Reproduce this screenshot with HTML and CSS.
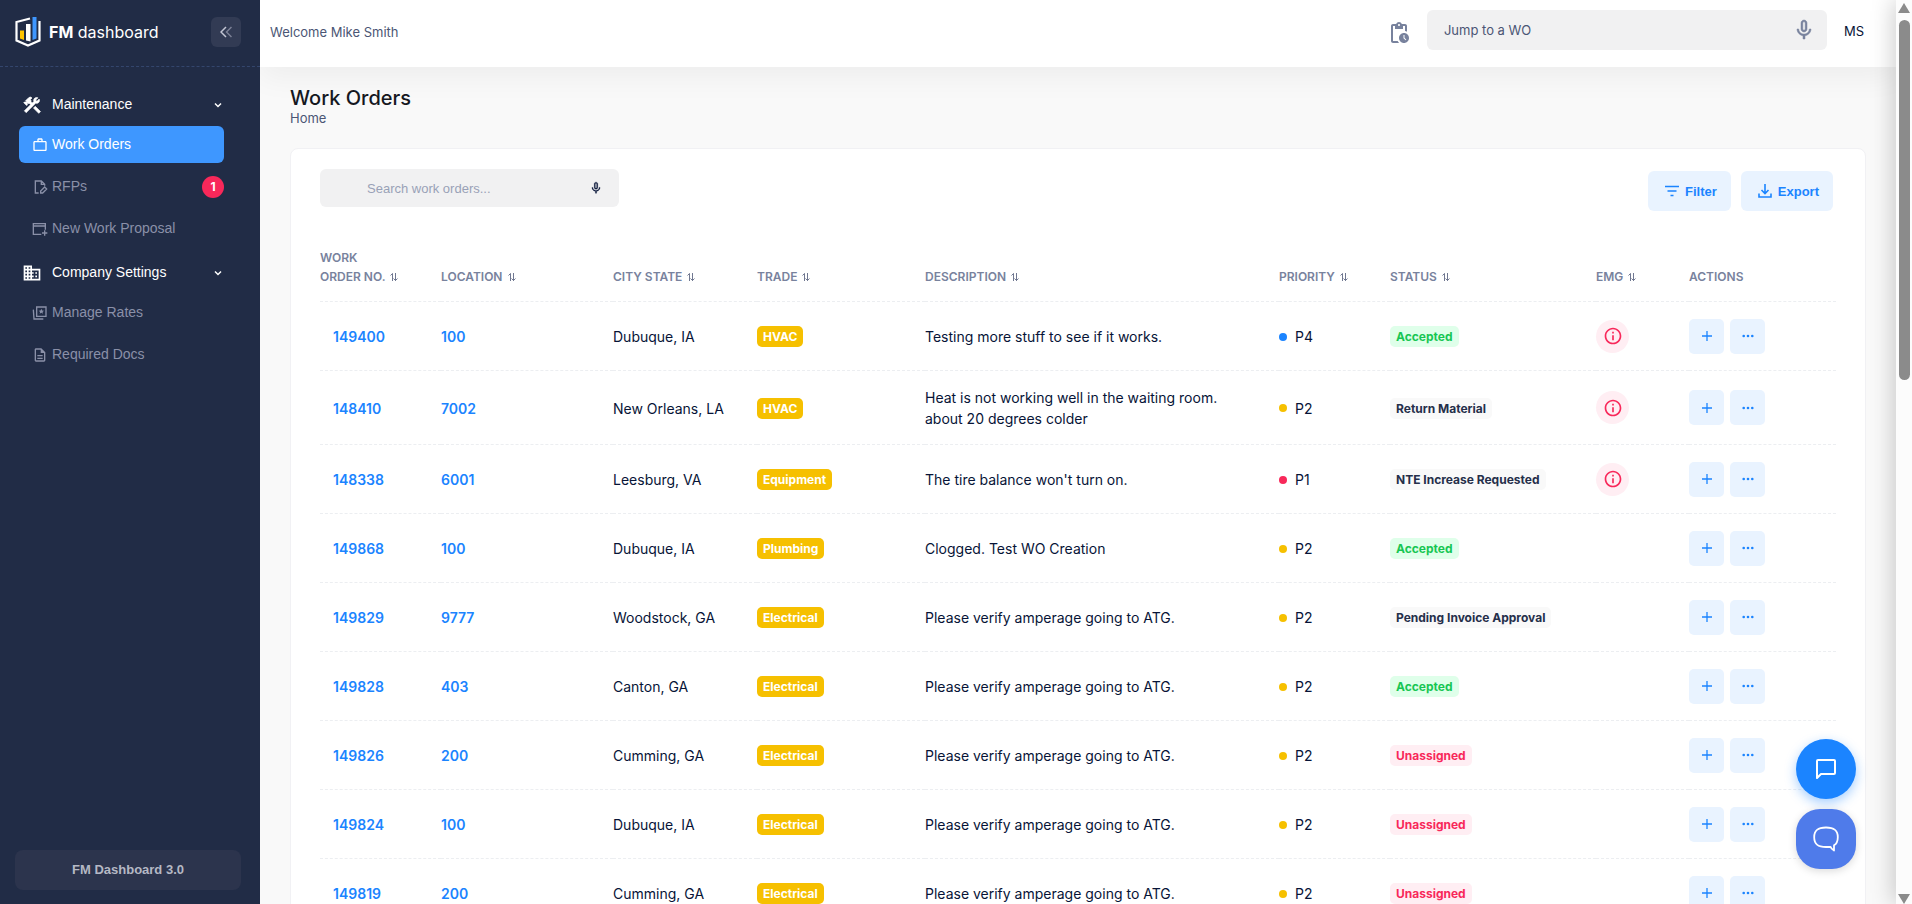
FILE: index.html
```
<!DOCTYPE html>
<html lang="en">

<head>
    <meta charset="UTF-8">
    <meta name="viewport" content="width=device-width, initial-scale=1.0">
    <title>FM Dashboard - Work Orders</title>
    <link rel="stylesheet" href="styles.css">
</head>

<body>
    <!-- icons -->
    <svg class="sprite" aria-hidden="true">
        <symbol id="mic" viewBox="0 0 24 24">
            <path d="M12 14c1.660 0 3-1.340 3-3V5c0-1.660-1.340-3-3-3S9 3.340 9 5v6c0 1.660 1.340 3 3 3zm-1.200-9.100c0-.66.54-1.200 1.200-1.200s1.200.54 1.200 1.200l-.01 6.200c0 .66-.53 1.200-1.190 1.200s-1.200-.54-1.200-1.200V4.900zM17.300 11c0 3-2.540 5.100-5.300 5.100S6.700 14 6.700 11H5c0 3.410 2.720 6.230 6 6.720V21h2v-3.280c3.280-.48 6-3.300 6-6.720h-1.700z" stroke="currentColor" stroke-width=".5" />
        </symbol>
        <symbol id="chevron" viewBox="0 0 8 8">
            <path d="M1 2.500l3 3 3-3" fill="none" stroke="currentColor" stroke-width="1.500" />
        </symbol>
        <symbol id="sort" viewBox="0 0 8 8">
            <path d="M.5 2.500L2.500.5V8M3.500 5.500l2 2 2-2M5.500 7.500V0" fill="none" stroke="currentColor" stroke-width=".8" />
        </symbol>
        <symbol id="info" viewBox="0 0 24 24">
            <path d="M11 7h2v2h-2zm0 4h2v6h-2zm1-9C6.480 2 2 6.480 2 12s4.480 10 10 10 10-4.480 10-10S17.520 2 12 2zm0 18c-4.410 0-8-3.590-8-8s3.590-8 8-8 8 3.590 8 8-3.590 8-8 8z" />
        </symbol>
        <symbol id="plus" viewBox="0 0 10 10">
            <path d="M5 0v10M0 5h10" stroke="currentColor" stroke-width="1.300" />
        </symbol>
        <symbol id="dots" viewBox="0 0 12 4">
            <circle cx="1.700" cy="2" r="1.300" />
            <circle cx="6" cy="2" r="1.300" />
            <circle cx="10.300" cy="2" r="1.300" />
        </symbol>
    </svg>

    <div class="app">
        <aside class="sidebar">
            <div class="brand">
                <a class="logo" href="#">
                    <svg class="logo-mark" viewBox="0 0 26 30">
                        <path d="M15 1.500L1.500 5v18.500L13 28.500l11.500-5V4" fill="none" stroke="#fff" stroke-width="2.200" />
                        <path d="M5 13.500h4V23l-4-1.500z" fill="#ffc400" />
                        <path d="M11 7h4.500v17.500L11 23.500z" fill="#fff" />
                        <path d="M17.500 0h4v21.500l-4 1.500z" fill="#3e97ff" />
                    </svg>
                    <span><b>FM</b> dashboard</span>
                </a>
                <button class="collapse" aria-label="Collapse menu">
                    <svg class="line" width="12" height="12" viewBox="0 0 12 12" stroke-width="1.500">
                        <path d="M6 1L1 6l5 5" stroke="#c3c6d4" />
                        <path d="M11.500 1l-5 5 5 5" stroke="#7c8196" />
                    </svg>
                </button>
            </div>
            <nav class="menu">
                <button class="menu-heading">
                    <svg class="heading-icon" viewBox="0 0 24 24">
                        <path d="M13.800 15.700l2.100-2.100 6.300 6.300-2.100 2.100zM17.500 10c1.930 0 3.500-1.570 3.500-3.500 0-.58-.16-1.120-.41-1.600l-2.700 2.700-1.490-1.490 2.700-2.700C18.620 3.160 18.080 3 17.500 3 15.570 3 14 4.570 14 6.500c0 .41.080.8.210 1.160l-1.850 1.850-1.780-1.780.71-.71-1.410-1.410L12 3.490a3 3 0 0 0-4.240 0L4.220 7.030l1.410 1.410H2.810l-.71.71 3.540 3.540.71-.71V9.150l1.410 1.410.71-.71 1.780 1.780-7.410 7.410 2.120 2.120L16.340 9.790c.36.130.75.210 1.160.21z" stroke="currentColor" stroke-width=".8" />
                    </svg>
                    Maintenance
                    <svg class="chevron"><use href="#chevron" /></svg>
                </button>
                <ul>
                    <li>
                        <a class="menu-item active" href="#">
                            <svg viewBox="0 0 24 24">
                                <path d="M14 6V4h-4v2h4zM4 8v11h16V8H4zm16-2c1.110 0 2 .89 2 2v11c0 1.110-.89 2-2 2H4c-1.110 0-2-.89-2-2V8c0-1.110.89-2 2-2h4V4c0-1.110.89-2 2-2h4c1.110 0 2 .89 2 2v2h4z" />
                            </svg>
                            Work Orders
                        </a>
                    </li>
                    <li>
                        <a class="menu-item" href="#">
                            <svg class="line" viewBox="0 0 24 24" stroke="currentColor" stroke-width="2">
                                <path d="M10 21H5V3h9l5 5v2M14 3v5h5M13 21v-3l6-6 3 3-6 6z" />
                            </svg>
                            RFPs
                            <span class="count">1</span>
                        </a>
                    </li>
                    <li>
                        <a class="menu-item" href="#">
                            <svg class="line" viewBox="0 0 24 24" stroke="currentColor" stroke-width="2">
                                <path d="M14 20H2V4h18v9M2 7.500h18M19 14v8M15 18h8" />
                            </svg>
                            New Work Proposal
                        </a>
                    </li>
                </ul>
                <button class="menu-heading">
                    <svg class="heading-icon" viewBox="0 0 24 24">
                        <path d="M12 7V3H2v18h20V7H12zM6 19H4v-2h2v2zm0-4H4v-2h2v2zm0-4H4V9h2v2zm0-4H4V5h2v2zm4 12H8v-2h2v2zm0-4H8v-2h2v2zm0-4H8V9h2v2zm0-4H8V5h2v2zm10 12h-8v-2h2v-2h-2v-2h2v-2h-2V9h8v10zm-2-8h-2v2h2v-2zm0 4h-2v2h2v-2z" />
                    </svg>
                    Company Settings
                    <svg class="chevron"><use href="#chevron" /></svg>
                </button>
                <ul>
                    <li>
                        <a class="menu-item" href="#">
                            <svg class="line" viewBox="0 0 24 24" stroke="currentColor" stroke-width="2">
                                <path d="M7 3h14v14H7zM2 7l1 14h14" />
                                <path d="M14 5.500l1.200 2.800 2.800.2-2.200 1.900.8 2.900-2.600-1.600-2.600 1.600.8-2.900L10 8.500l2.800-.2z" fill="currentColor" stroke="none" />
                            </svg>
                            Manage Rates
                        </a>
                    </li>
                    <li>
                        <a class="menu-item" href="#">
                            <svg viewBox="0 0 24 24">
                                <path d="M8 16h8v2H8zm0-4h8v2H8zm6-10H6c-1.100 0-2 .9-2 2v16c0 1.100.89 2 1.990 2H18c1.100 0 2-.9 2-2V8l-6-6zm4 18H6V4h7v5h5v11z" />
                            </svg>
                            Required Docs
                        </a>
                    </li>
                </ul>
            </nav>
            <a class="version" href="#">FM Dashboard 3.0</a>
        </aside>

        <div class="page">
            <header class="topbar">
                <span class="welcome">Welcome Mike Smith</span>
                <div class="topbar-tools">
                    <button class="icon-button" aria-label="Pending work orders">
                        <svg width="24" height="24" viewBox="0 0 24 24">
                            <path d="M17 12c-2.760 0-5 2.240-5 5s2.240 5 5 5 5-2.240 5-5-2.240-5-5-5zm1.650 7.350L16.500 17.200V14h1v2.790l1.850 1.850-.7.710zM18 3h-3.180C14.400 1.840 13.300 1 12 1s-2.400.84-2.820 2H6c-1.100 0-2 .9-2 2v15c0 1.100.9 2 2 2h6.110a6.740 6.740 0 0 1-1.420-2H6V5h2v3h8V5h2v5.080c.71.100 1.380.31 2 .6V5c0-1.100-.9-2-2-2zm-6 2c-.55 0-1-.45-1-1s.45-1 1-1 1 .45 1 1-.45 1-1 1z" />
                        </svg>
                    </button>
                    <div class="jump">
                        <input type="text" placeholder="Jump to a WO" aria-label="Jump to a WO">
                        <button class="icon-button" aria-label="Speak"><svg width="24" height="24"><use href="#mic" /></svg></button>
                    </div>
                    <a class="initials" href="#">MS</a>
                </div>
            </header>

            <main class="content">
                <h1>Work Orders</h1>
                <a class="crumb" href="#">Home</a>

                <section class="card">
                    <div class="toolbar">
                        <div class="search">
                            <input type="text" placeholder="Search work orders..." aria-label="Search work orders">
                            <button class="icon-button dark" aria-label="Speak"><svg width="14" height="14"><use href="#mic" /></svg></button>
                        </div>
                        <div class="buttons">
                            <button class="button">
                                <svg class="line" width="16" height="16" viewBox="0 0 16 16" stroke="currentColor" stroke-width="1.600">
                                    <path d="M1 3.500h14M3.500 8h9M6.500 12.500h3" />
                                </svg>
                                Filter
                            </button>
                            <button class="button">
                                <svg class="line" width="16" height="16" viewBox="0 0 16 16" stroke="currentColor" stroke-width="1.600">
                                    <path d="M8 1v9M4.500 7L8 10.500 11.500 7M2 10.500V14h12v-3.500" />
                                </svg>
                                Export
                            </button>
                        </div>
                    </div>

                    <table class="orders">
                        <thead>
                            <tr>
                                <th class="col-number">Work<br>Order No. <svg><use href="#sort" /></svg></th>
                                <th class="col-location">Location <svg><use href="#sort" /></svg></th>
                                <th class="col-city">City State <svg><use href="#sort" /></svg></th>
                                <th class="col-trade">Trade <svg><use href="#sort" /></svg></th>
                                <th>Description <svg><use href="#sort" /></svg></th>
                                <th class="col-priority">Priority <svg><use href="#sort" /></svg></th>
                                <th class="col-status">Status <svg><use href="#sort" /></svg></th>
                                <th class="col-emg">EMG <svg><use href="#sort" /></svg></th>
                                <th class="col-actions">Actions</th>
                            </tr>
                        </thead>
                        <tbody id="orders"></tbody>
                    </table>
                </section>
            </main>
        </div>

        <div class="scrollbar">
            <span class="arrow-up"></span>
            <span class="thumb"></span>
            <span class="arrow-down"></span>
        </div>
    </div>

    <div class="floating">
        <button class="feedback" aria-label="Feedback">
            <svg class="line" width="20" height="20" viewBox="0 0 20 20" stroke="#fff" stroke-width="2" stroke-linejoin="round">
                <path d="M1 19V2q0-1 1-1h16q1 0 1 1v12q0 1-1 1H5z" />
            </svg>
        </button>
        <button class="chat" aria-label="Chat">
            <svg class="line" width="26" height="26" viewBox="0 0 26 26" stroke="#fff" stroke-width="1.800" stroke-linejoin="round">
                <path d="M21 24.500c-1.500-.8-3-2.200-3.500-3.700-1.500.2-3 .2-4.500.2C4.500 21 1.200 18 1.200 11.200S4.500 1.500 13 1.500s11.800 3 11.800 9.700c0 3.800-1 6.500-3.800 8.100z" />
            </svg>
        </button>
    </div>

    <script>
        // number, location, city, trade, description, priority, status, emergency
        const orders = [
            ['149400', '100', 'Dubuque, IA', 'HVAC', 'Testing more stuff to see if it works.', 'P4', 'Accepted', true],
            ['148410', '7002', 'New Orleans, LA', 'HVAC', 'Heat is not working well in the waiting room.<br>about 20 degrees colder', 'P2', 'Return Material', true],
            ['148338', '6001', 'Leesburg, VA', 'Equipment', "The tire balance won't turn on.", 'P1', 'NTE Increase Requested', true],
            ['149868', '100', 'Dubuque, IA', 'Plumbing', 'Clogged. Test WO Creation', 'P2', 'Accepted', false],
            ['149829', '9777', 'Woodstock, GA', 'Electrical', 'Please verify amperage going to ATG.', 'P2', 'Pending Invoice Approval', false],
            ['149828', '403', 'Canton, GA', 'Electrical', 'Please verify amperage going to ATG.', 'P2', 'Accepted', false],
            ['149826', '200', 'Cumming, GA', 'Electrical', 'Please verify amperage going to ATG.', 'P2', 'Unassigned', false],
            ['149824', '100', 'Dubuque, IA', 'Electrical', 'Please verify amperage going to ATG.', 'P2', 'Unassigned', false],
            ['149819', '200', 'Cumming, GA', 'Electrical', 'Please verify amperage going to ATG.', 'P2', 'Unassigned', false],
        ]

        const statusClass = {
            Accepted: 'success',
            Unassigned: 'danger',
        }

        document.querySelector('#orders').innerHTML = orders.map(([number, location, city, trade, text, priority, status, emg]) => `
            <tr>
                <td class="number"><a href="#">${number}</a></td>
                <td><a href="#">${location}</a></td>
                <td>${city}</td>
                <td><span class="badge trade">${trade}</span></td>
                <td>${text}</td>
                <td><span class="priority ${priority.toLowerCase()}">${priority}</span></td>
                <td><span class="badge ${statusClass[status] || 'light'}">${status}</span></td>
                <td>${emg ? '<span class="emg"><svg><use href="#info" /></svg></span>' : ''}</td>
                <td>
                    <div class="actions">
                        <button aria-label="Add"><svg width="10" height="10"><use href="#plus" /></svg></button>
                        <button aria-label="More"><svg width="12" height="4"><use href="#dots" /></svg></button>
                    </div>
                </td>
            </tr>`).join('')
    </script>
</body>

</html>
```
FILE: styles.css
```
* {
    margin: 0;
    padding: 0;
    box-sizing: border-box;
}

body {
    height: 100vh;
    overflow: hidden;
    font-family: Inter, sans-serif;
    font-size: 14px;
    line-height: 21px;
    color: #071437;
    background: #f9f9f9;
}

a {
    color: inherit;
    text-decoration: none;
}

ul {
    list-style: none;
}

button,
input {
    border: 0;
    background: none;
    font: inherit;
    color: inherit;
}

button {
    display: flex;
    align-items: center;
    justify-content: center;
    cursor: pointer;
}

svg {
    flex: none;
    fill: currentColor;
}

svg.line {
    fill: none;
}

.sprite {
    display: none;
}

.app {
    display: flex;
    height: 100vh;
}

/* sidebar */
.sidebar {
    z-index: 2;
    flex: none;
    display: flex;
    flex-direction: column;
    width: 260px;
    background: #212c46;
    font-family: "Liberation Sans", Arial, sans-serif;
}

.brand {
    display: flex;
    align-items: center;
    justify-content: space-between;
    height: 67px;
    padding: 0 19px 2px 15px;
    border-bottom: 1px dashed #34466d;
}

.logo {
    display: flex;
    align-items: center;
    gap: 8px;
    color: #fff;
    font-family: Inter, sans-serif;
    font-size: 16px;
}

.logo b {
    font-weight: 700;
}

.logo-mark {
    width: 26px;
    height: 30px;
}

.collapse {
    width: 30px;
    height: 30px;
    border-radius: 6px;
    background: #323b54;
}

.menu {
    flex: 1;
    padding: 16px 36px 0 19px;
}

.menu-heading {
    width: 100%;
    height: 43px;
    justify-content: flex-start;
    padding: 0 2px 0 3px;
    color: #fff;
}

.heading-icon {
    width: 20px;
    height: 20px;
    margin-right: 10px;
}

.chevron {
    width: 8px;
    height: 8px;
    margin-left: auto;
}

.menu ul {
    display: flex;
    flex-direction: column;
    gap: 5px;
    padding-bottom: 4px;
}

.menu-item {
    display: flex;
    align-items: center;
    height: 37px;
    padding-left: 13px;
    border-radius: 6px;
    color: #8a90a8;
}

.menu-item svg {
    width: 16px;
    height: 16px;
    margin-right: 4px;
}

.menu-item.active {
    color: #fff;
    background: #3e97ff;
}

.count {
    width: 22px;
    height: 22px;
    margin-left: auto;
    border-radius: 50%;
    background: #f8285a;
    color: #fff;
    font: 700 12px/22px Inter, sans-serif;
    text-align: center;
}

.version {
    margin: 14px 19px 14px 15px;
    border-radius: 8px;
    background: #2c344d;
    color: #b5b8c4;
    font-size: 13px;
    font-weight: 700;
    line-height: 40px;
    text-align: center;
}

/* top bar */
.page {
    flex: 1;
    display: flex;
    flex-direction: column;
    min-width: 0;
}

.topbar {
    flex: none;
    display: flex;
    justify-content: space-between;
    height: 67px;
    padding: 10px 32px 0 10px;
    background: #fff;
    box-shadow: 0 10px 30px rgba(0, 0, 0, .05);
    font-size: 13px;
}

.welcome {
    color: #4b5675;
    line-height: 45px;
}

.topbar-tools {
    display: flex;
    align-items: flex-start;
}

.icon-button {
    color: #78829d;
}

.icon-button.dark {
    color: #071437;
}

.topbar-tools > .icon-button {
    margin: 11px 16px 0 0;
}

.jump,
.search {
    display: flex;
    align-items: center;
    border-radius: 6px;
    background: #f1f1f2;
}

.jump {
    width: 400px;
    height: 40px;
    padding: 0 11px 0 17px;
}

.jump input,
.search input {
    flex: 1;
    min-width: 0;
    outline: none;
}

.jump input::placeholder {
    color: #4b5675;
}

.initials {
    margin-left: 17px;
    line-height: 42px;
}

/* content */
.content {
    padding: 19px 30px 0;
}

h1 {
    font-size: 20px;
    font-weight: 500;
    line-height: 24px;
    color: #15181f;
}

.crumb {
    display: block;
    font-size: 13px;
    line-height: 16px;
    color: #4b5675;
}

.card {
    margin-top: 22px;
    padding: 20px 29px;
    border: 1px solid #f1f1f4;
    border-radius: 8px;
    background: #fff;
}

.toolbar {
    display: flex;
    justify-content: space-between;
    align-items: flex-start;
    height: 75px;
}

.search {
    width: 299px;
    height: 38px;
    padding: 0 16px 0 47px;
    font-family: "Liberation Sans", Arial, sans-serif;
    font-size: 13px;
}

.search input::placeholder {
    color: #99a1b7;
}

.buttons {
    display: flex;
    gap: 10px;
    padding: 2px 3px 0 0;
}

.button {
    gap: 5px;
    height: 40px;
    padding: 0 14px 0 16px;
    border-radius: 6px;
    background: #e9f3ff;
    color: #1b84ff;
    font-family: "Liberation Sans", Arial, sans-serif;
    font-size: 13px;
    font-weight: 700;
}

/* orders table */
.orders {
    width: 100%;
    table-layout: fixed;
    border-collapse: separate;
    border-spacing: 0;
}

.orders th,
.orders td {
    border-bottom: 1px dashed #eceef1;
    text-align: left;
}

.orders th {
    height: 58px;
    padding-bottom: 15px;
    vertical-align: bottom;
    font-size: 12px;
    font-weight: 600;
    line-height: 19px;
    text-transform: uppercase;
    color: #78829d;
}

.orders th svg {
    width: 8px;
    height: 8px;
    margin-left: 2px;
    color: #4b5675;
}

.orders td {
    height: 69px;
    padding: 16px 0 15px;
}

.orders a {
    color: #1b84ff;
    font-weight: 600;
}

.orders .number {
    padding-left: 13px;
}

.col-number {
    width: 121px;
}

.col-location {
    width: 172px;
}

.col-city {
    width: 144px;
}

.col-trade {
    width: 168px;
}

.col-priority {
    width: 111px;
}

.col-status {
    width: 206px;
}

.col-emg {
    width: 93px;
}

.col-actions {
    width: 147px;
}

.badge {
    display: inline-block;
    padding: 0 6px;
    border-radius: 5px;
    font-size: 12px;
    font-weight: 700;
    line-height: 21px;
    vertical-align: top;
}

.trade {
    background: #f6c000;
    color: #fff;
}

.success {
    background: #dfffea;
    color: #17c653;
}

.danger {
    background: #ffeef3;
    color: #f8285a;
}

.light {
    background: #f9f9f9;
    color: #252f4a;
}

.priority {
    display: flex;
    align-items: center;
    gap: 8px;
}

.priority::before {
    content: "";
    width: 8px;
    height: 8px;
    border-radius: 50%;
    background: #f6c000;
}

.priority.p1::before {
    background: #f8285a;
}

.priority.p4::before {
    background: #1b84ff;
}

.orders td:has(.emg),
.orders td:has(.actions) {
    padding: 0;
}

.emg {
    display: flex;
    align-items: center;
    justify-content: center;
    width: 33px;
    height: 33px;
    border-radius: 50%;
    background: #ffeef3;
    color: #f8285a;
}

.emg svg {
    width: 20px;
    height: 20px;
}

.actions {
    display: flex;
    gap: 6px;
}

.actions button {
    width: 35px;
    height: 35px;
    border-radius: 5px;
    background: #e9f3ff;
    color: #1b84ff;
}

/* scrollbar */
.scrollbar {
    z-index: 2;
    flex: none;
    display: flex;
    flex-direction: column;
    align-items: center;
    width: 16px;
    padding-top: 3px;
    background: #fcfcfc;
    box-shadow: 0 0 24px rgba(0, 0, 0, .28);
}

.arrow-up,
.arrow-down {
    border: 6px solid transparent;
}

.arrow-up {
    border-top: 0;
    border-bottom: 10px solid #8b8b8b;
}

.arrow-down {
    margin-top: auto;
    border-top: 10px solid #8b8b8b;
    border-bottom: 0;
}

.thumb {
    width: 11px;
    height: 40%;
    margin-top: 7px;
    border-radius: 6px;
    background: #8b8b8b;
}

/* floating buttons over the page */
.floating {
    position: fixed;
    right: 56px;
    bottom: 35px;
    z-index: 3;
    display: flex;
    flex-direction: column;
    gap: 10px;
}

.floating button {
    width: 60px;
    height: 60px;
}

.feedback {
    border-radius: 50%;
    background: #1b84ff;
    box-shadow: 0 4px 12px rgba(27, 132, 255, .4);
}

.chat {
    border-radius: 24px;
    background: #4f7bea;
    box-shadow: 0 2px 8px rgba(0, 0, 0, .15);
}
```
